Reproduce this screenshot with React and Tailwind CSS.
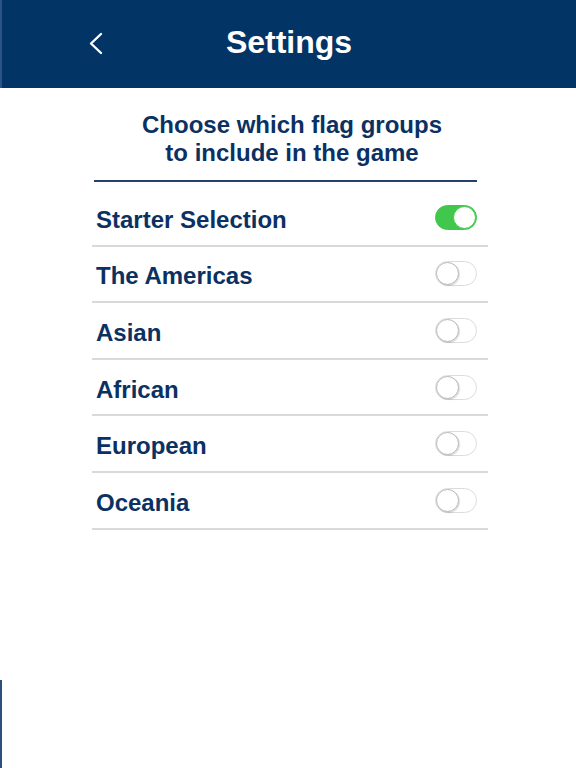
import React, { useState } from 'react'

const groups = [
  { name: 'Starter Selection', on: true },
  { name: 'The Americas', on: false },
  { name: 'Asian', on: false },
  { name: 'African', on: false },
  { name: 'European', on: false },
  { name: 'Oceania', on: false },
]

function Toggle({ on, onClick }) {
  return (
    <button
      onClick={onClick}
      className={`flex items-center w-[42px] h-[25px] rounded-full border ${on ? 'justify-end bg-[#41c84c] border-[#41c84c]' : 'justify-start bg-white border-[#dcdcdc]'}`}
    >
      <span
        className={`w-[23px] h-[23px] rounded-full bg-white border ${on ? 'border-[#41c84c]' : 'border-[#b8b8b8] shadow-[1px_1px_1px_rgba(0,0,0,0.12)]'}`}
      />
    </button>
  )
}

export default function App() {
  const [items, setItems] = useState(groups)

  const flip = (i) => {
    setItems(items.map((g, j) => (j === i ? { ...g, on: !g.on } : g)))
  }

  return (
    <div className="min-h-[768px] bg-white font-['Liberation_Sans',Arial,sans-serif] flex">
      {/* thin edge line at the bottom left */}
      <div className="w-0 flex flex-col justify-end">
        <div className="w-[2px] h-[88px] bg-[#2c4f80]" />
      </div>

      <div className="flex-1 flex flex-col">
        {/* Header */}
        <div className="h-[88px] bg-[#023465] border-l-2 border-[#2c5286] flex items-center pb-[4px]">
          <button className="w-[20px] h-[28px] ml-[84px] mt-[4px]">
            <svg width="20" height="28" viewBox="0 0 20 28" fill="none">
              <polyline points="15,4 5,13.5 15,23" stroke="white" strokeWidth="2.4" strokeLinecap="round" strokeLinejoin="round" />
            </svg>
          </button>
          <h1 className="flex-1 text-center text-white text-[32px] font-bold pr-[104px]">Settings</h1>
        </div>

        {/* Intro */}
        <div className="pt-[23px] pl-[8px] text-center text-[#0b3162] text-[24px] leading-[28px] font-bold">
          <p>Choose which flag groups</p>
          <p>to include in the game</p>
        </div>
        <div className="ml-[94px] w-[383px] h-[2px] bg-[#24416b] mt-[13px]" />

        {/* Groups */}
        <div className="ml-[92px] w-[396px] mt-[8px]">
          {items.map((g, i) => (
            <div
              key={g.name}
              className="h-[56.6px] flex items-center justify-between pl-[4px] pr-[11px] border-b-2 border-[#d9d9d9]"
            >
              <span className="pt-[5px] text-[#0b3162] text-[24px] font-bold">{g.name}</span>
              <Toggle on={g.on} onClick={() => flip(i)} />
            </div>
          ))}
        </div>
      </div>
    </div>
  )
}
